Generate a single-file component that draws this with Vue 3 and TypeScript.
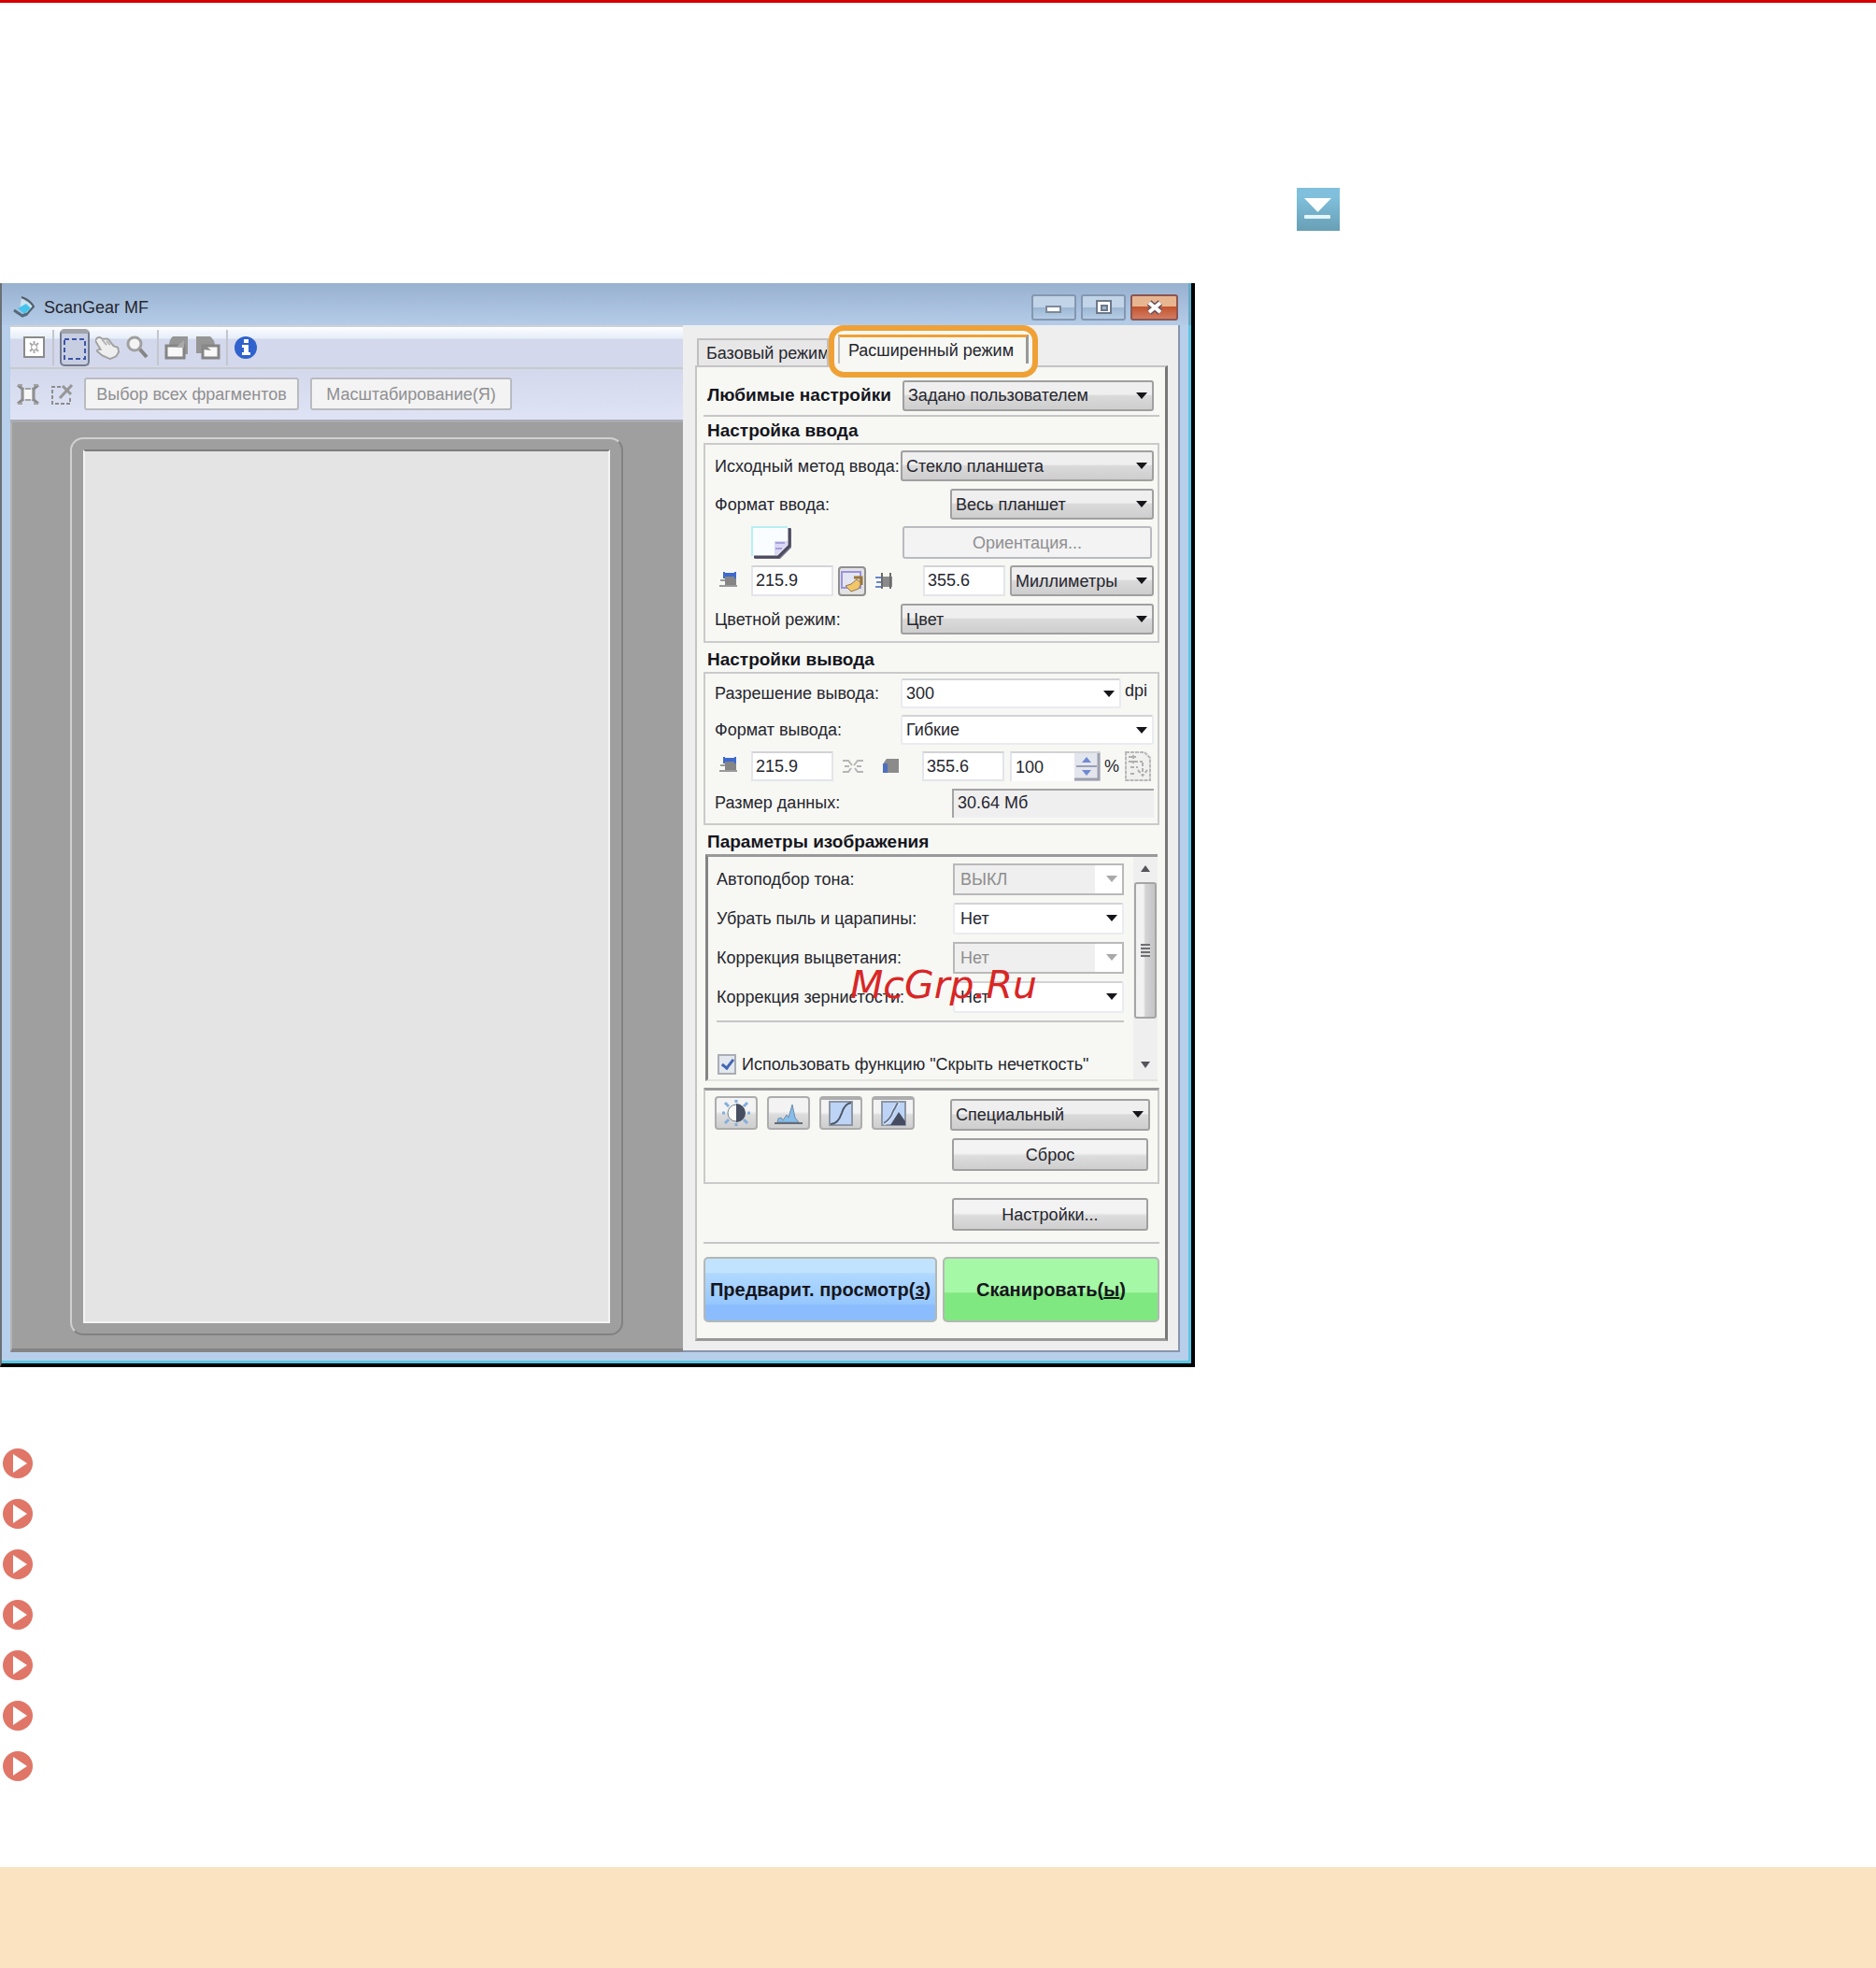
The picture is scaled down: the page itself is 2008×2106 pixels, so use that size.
<script setup lang="ts">
import { ref } from 'vue'

interface Option {
  id: string
  label: string
  value: string
  disabled: boolean
}

const imageOptions: Option[] = [
  { id: 'tone', label: 'Автоподбор тона:', value: 'ВЫКЛ', disabled: true },
  { id: 'dust', label: 'Убрать пыль и царапины:', value: 'Нет', disabled: false },
  { id: 'fade', label: 'Коррекция выцветания:', value: 'Нет', disabled: true },
  { id: 'grain', label: 'Коррекция зернистости:', value: 'Нет', disabled: false },
]

const topics = [1, 2, 3, 4, 5, 6, 7]
const inputWidth = ref('215.9')
const inputHeight = ref('355.6')
const outputWidth = ref('215.9')
const outputHeight = ref('355.6')
const scale = ref('100')
const unsharp = ref(true)
</script>

<template>
  <main class="page">
    <header class="page-head">
      <a href="#top" class="jump" aria-label="Вниз">
        <svg viewBox="0 0 46 46" width="46" height="46">
          <path d="M8 11h29L22.500 26z" fill="#fff" />
          <rect x="8" y="29" width="28" height="4" rx="1" fill="#e4f5fb" />
        </svg>
      </a>
    </header>

    <section class="window">
      <div class="titlebar">
        <svg class="app-icon" viewBox="0 0 26 24" width="26" height="24">
          <path d="M9 2l13 9-7 9-8-6z" fill="#cfe3ee" />
          <path d="M9 1q9 3 13 10l-8 9" fill="none" stroke="#4f5d69" stroke-width="2" />
          <path d="M5 13l9-5 5 5-7 6z" fill="#45c3ec" />
          <path d="M1 15l9 6 5-2" fill="none" stroke="#566a7c" stroke-width="3" />
        </svg>
        <span class="app-name">ScanGear MF</span>
        <button class="win-btn" aria-label="Свернуть">
          <svg viewBox="0 0 20 16" width="20" height="16"><rect x="2" y="7" width="15" height="6" fill="#fff" stroke="#7d8898" stroke-width="2" /></svg>
        </button>
        <button class="win-btn" aria-label="Развернуть">
          <svg viewBox="0 0 20 16" width="20" height="16"><rect x="3" y="1" width="15" height="13" fill="#fff" stroke="#6d7888" stroke-width="2" /><rect x="8" y="6" width="6" height="5" fill="#9bb4cd" stroke="#6d7888" stroke-width="2" /></svg>
        </button>
        <button class="win-btn close" aria-label="Закрыть">
          <svg viewBox="0 0 20 16" width="20" height="16"><path d="M4 3l12 10M16 3L4 13" stroke="#6c5560" stroke-width="7" /><path d="M4 3l12 10M16 3L4 13" stroke="#fff" stroke-width="4" /></svg>
        </button>
      </div>

      <div class="body">
        <div class="preview">
          <div class="tools">
            <button class="tool" aria-label="Автокадрирование">
              <svg viewBox="0 0 26 26" width="26" height="26"><rect x="2" y="2" width="21" height="21" fill="#fff" stroke="#8b8b8b" stroke-width="2" /><path d="M8 8l9 9M17 8l-9 9M12.500 6v3M12.500 16v3" stroke="#aaa" stroke-width="2" /><circle cx="12.500" cy="12.500" r="3" fill="#fff" stroke="#999" /></svg>
            </button>
            <i class="sep"></i>
            <button class="tool on" aria-label="Рамка обрезки">
              <svg viewBox="0 0 26 26" width="26" height="26"><rect x="2" y="3" width="22" height="21" fill="none" stroke="#3b55a8" stroke-width="2" stroke-dasharray="5 3" /></svg>
            </button>
            <button class="tool" aria-label="Переместить">
              <svg viewBox="0 0 28 28" width="26" height="26"><path d="M2 3q3-2 6 1h4q3-1 5 3l4 5 5 2 1 5-3 5-7 3-9-4-6-5q0-2 4-2l-3-5-3-5z" fill="#eee" stroke="#a0a0a0" stroke-width="2" /><path d="M8 5l5 6M13 6l4 5" stroke="#b4b4b4" stroke-width="2" /></svg>
            </button>
            <button class="tool" aria-label="Увеличить">
              <svg viewBox="0 0 26 26" width="26" height="26"><path d="M15 14l8 9" stroke="#858585" stroke-width="4" /><circle cx="10" cy="9" r="7" fill="#f4f4f4" stroke="#a0a0a0" stroke-width="3" /></svg>
            </button>
            <i class="sep wide"></i>
            <button class="tool" aria-label="Повернуть влево">
              <svg viewBox="0 0 26 28" width="26" height="28"><path d="M9 2h16v19h-4V12H5q0-7 4-10z" fill="#969696" /><rect x="2" y="12" width="19" height="13" fill="#f8f8f8" stroke="#858585" stroke-width="3" /><path d="M12 14L21 6v8z" fill="#aaa" /></svg>
            </button>
            <button class="tool" aria-label="Повернуть вправо">
              <svg viewBox="0 0 28 28" width="28" height="28"><path d="M2 2h15q5 4 5 10H9v8H2z" fill="#969696" /><rect x="9" y="12" width="17" height="13" fill="#f8f8f8" stroke="#858585" stroke-width="3" /><path d="M9 9l9 8-9-1z" fill="#8b8b8b" /></svg>
            </button>
            <i class="sep"></i>
            <button class="tool" aria-label="Сведения">
              <svg viewBox="0 0 26 26" width="26" height="26"><circle cx="13" cy="13" r="12" fill="#2f62cc" /><rect x="11" y="4" width="5" height="4" fill="#fff" /><path d="M9 10h7v8h2v3H9v-3h2v-5H9z" fill="#fff" /></svg>
            </button>
          </div>
          <div class="tools second">
            <button class="tool" aria-label="Убрать рамку">
              <svg viewBox="0 0 26 24" width="26" height="24"><path d="M2 2l6 5M24 2l-6 5M2 22l6-5M24 22l-6-5" stroke="#8a8a8a" stroke-width="3" /><path d="M2 2h5M19 2h5M2 22h5M19 22h5M10 6h6M10 18h6" stroke="#a4a4a4" stroke-width="2" /><path d="M7 5v14M19 5v14" stroke="#8f8f8f" stroke-width="3" /><rect x="9" y="7" width="8" height="10" fill="#f7f7f7" /></svg>
            </button>
            <button class="tool" aria-label="Удалить рамку">
              <svg viewBox="0 0 26 24" width="26" height="24"><path d="M12 4H3v18h19v-8" fill="none" stroke="#8d8d8d" stroke-width="2" stroke-dasharray="4 2" /><path d="M14 3l9 9M24 2L11 16" stroke="#969696" stroke-width="3" /></svg>
            </button>
            <button class="flat all" disabled>Выбор всех фрагментов</button>
            <button class="flat zoom" disabled>Масштабирование(Я)</button>
          </div>
          <div class="bed">
            <div class="frame"><div class="sheet"></div></div>
          </div>
        </div>

        <div class="side">
          <div class="tabs" role="tablist">
            <button class="tab" role="tab" aria-selected="false">Базовый режим</button>
            <div class="marked">
              <button class="tab active" role="tab" aria-selected="true">Расширенный режим</button>
            </div>
          </div>

          <form class="panel" @submit.prevent>
            <div class="row fav">
              <label class="bold" for="fav">Любимые настройки</label>
              <span class="combo w-fav"><select id="fav"><option>Задано пользователем</option></select></span>
            </div>
            <hr class="first" />

            <h2>Настройка ввода</h2>
            <div class="group input">
              <div class="row">
                <label for="src">Исходный метод ввода:</label>
                <span class="combo w-full"><select id="src"><option>Стекло планшета</option></select></span>
              </div>
              <div class="row">
                <label for="fmt">Формат ввода:</label>
                <span class="combo w-part"><select id="fmt"><option>Весь планшет</option></select></span>
              </div>
              <div class="row">
                <svg class="sheet-icon" viewBox="0 0 44 36" width="44" height="36">
                  <path d="M4 3h39v20L31 35H4z" fill="#77758a" />
                  <path d="M1 1h39v19L28 32H1z" fill="#fafdff" />
                  <path d="M1 32V1h38" fill="none" stroke="#b8eff3" stroke-width="2" />
                  <path d="M41 2v19L29 33H3" fill="none" stroke="#4d4b60" stroke-width="3" />
                  <path d="M25 16h14v4L28 31h-3z" fill="#d9d7f4" /><path d="M26 18h10M26 24h7" stroke="#a5a2dd" stroke-width="2" />
                </svg>
                <button class="flat orient" disabled>Ориентация...</button>
              </div>
              <div class="row sizes">
                <svg class="dim" viewBox="0 0 20 20" width="20" height="20"><rect x="6" y="5" width="12" height="11" fill="#858585" /><path d="M5 3h13" stroke="#3d69d1" stroke-width="4" /><path d="M5 0v7M17 0v7" stroke="#3d69d1" stroke-width="2" /><path d="M1 9h5M0 15h19" stroke="#999" stroke-width="2" /></svg>
                <input v-model="inputWidth" class="num" aria-label="Ширина ввода" />
                <button class="swap" aria-label="Поменять местами">
                  <svg viewBox="0 0 26 28" width="26" height="28"><path d="M2 4h20v17H2z" fill="#e4e5f3" stroke="#9993e0" stroke-width="2" /><path d="M6 19l6-2 6-5 5 4-3 6-8 3z" fill="#f2c66b" stroke="#8b7856" /><path d="M15 10h8v8" stroke="#9b7536" stroke-width="3" fill="none" /></svg>
                </button>
                <svg class="dim" viewBox="0 0 20 20" width="20" height="20"><rect x="7" y="5" width="12" height="11" fill="#8a8a8a" /><path d="M8 1v17M17 1v17" stroke="#6b6b6b" stroke-width="2" /><path d="M1 6h6M2 11h5M1 16h6" stroke="#6886cf" stroke-width="2" /></svg>
                <input v-model="inputHeight" class="num second-num" aria-label="Высота ввода" />
                <span class="combo w-unit"><select aria-label="Единицы"><option>Миллиметры</option></select></span>
              </div>
              <div class="row">
                <label for="color">Цветной режим:</label>
                <span class="combo w-full"><select id="color"><option>Цвет</option></select></span>
              </div>
            </div>

            <h2>Настройки вывода</h2>
            <div class="group output">
              <div class="row">
                <label for="dpi">Разрешение вывода:</label>
                <span class="combo white w-dpi"><select id="dpi"><option>300</option></select></span>
                <span class="dpi">dpi</span>
              </div>
              <div class="row">
                <label for="out">Формат вывода:</label>
                <span class="combo white w-full"><select id="out"><option>Гибкие</option></select></span>
              </div>
              <div class="row sizes">
                <svg class="dim" viewBox="0 0 20 20" width="20" height="20"><rect x="6" y="5" width="12" height="11" fill="#858585" /><path d="M5 3h13" stroke="#3d69d1" stroke-width="4" /><path d="M5 0v7M17 0v7" stroke="#3d69d1" stroke-width="2" /><path d="M1 9h5M0 15h19" stroke="#999" stroke-width="2" /></svg>
                <input v-model="outputWidth" class="num" aria-label="Ширина вывода" />
                <svg class="chain" viewBox="0 0 24 16" width="24" height="16"><path d="M1 2h6l4 5M1 14h6l3-4M23 2h-6l-4 5M23 14h-6l-3-4M3 8h5M16 8h5" fill="none" stroke="#b5b5b5" stroke-width="2" /></svg>
                <svg class="dim out-height" viewBox="0 0 20 20" width="20" height="20"><path d="M6 2h13v15H3V6z" fill="#8b8b8b" /><path d="M2 7h5v10H2z" fill="#4f6fc3" /></svg>
                <input v-model="outputHeight" class="num second-num" aria-label="Высота вывода" />
                <span class="spin">
                  <input v-model="scale" aria-label="Масштаб" />
                  <button aria-label="Изменить масштаб">
                    <svg viewBox="0 0 28 30" width="28" height="30"><path d="M8 10l5-6 5 6zM8 18l5 6 5-6z" fill="#7189d0" /><path d="M2 14h22" stroke="#9aa0b5" stroke-width="2" /><path d="M0 28h26V0" fill="none" stroke="#9da0ad" stroke-width="3" /></svg>
                  </button>
                </span>
                <span class="percent">%</span>
                <svg class="paper" viewBox="0 0 28 32" width="28" height="32"><path d="M1 1h20l6 6v24H1z" fill="#f0f0ef" stroke="#b7b7b7" stroke-width="2" stroke-dasharray="4 1" /><path d="M4 11h15M4 6h8M6 17h8M6 24h6M19 12v13M14 20l5 6 5-6M9 4v9" fill="none" stroke="#b0b0b0" stroke-width="2" stroke-dasharray="4 2" /></svg>
              </div>
              <div class="row">
                <label for="bytes">Размер данных:</label>
                <output id="bytes" class="bytes">30.64 Мб</output>
              </div>
            </div>

            <h2>Параметры изображения</h2>
            <div class="scroller">
              <div class="options">
                <div v-for="o in imageOptions" :key="o.id" class="row">
                  <label :for="o.id">{{ o.label }}</label>
                  <span class="combo w-opt" :class="o.disabled ? 'off' : 'white'">
                    <select :id="o.id" :disabled="o.disabled"><option>{{ o.value }}</option></select>
                  </span>
                </div>
                <hr />
                <label class="check"><input v-model="unsharp" type="checkbox" /><span>Использовать функцию "Скрыть нечеткость"</span></label>
              </div>
              <div class="scrollbar" aria-hidden="true">
                <i class="up"></i>
                <div class="thumb"><i></i></div>
                <i class="down"></i>
              </div>
            </div>

            <div class="group adjust">
              <div class="curves">
                <button aria-label="Яркость и контрастность">
                  <svg viewBox="0 0 30 28" width="30" height="28"><path d="M3 3l4 4M27 3l-4 4M3 25l4-4M27 25l-4-4M0 14h3M27 14h3M15 0v3M15 25v3" stroke="#82aede" stroke-width="3" /><circle cx="15" cy="14" r="9" fill="#f8fafa" stroke="#77828e" /><path d="M15 4a10 10 0 0 1 0 20z" fill="#484e62" /></svg>
                </button>
                <button aria-label="Гистограмма">
                  <svg viewBox="0 0 30 28" width="30" height="28"><path d="M3 24l1-4 3-1 2 3 4-6 2 3 4-14 3 14 4 5z" fill="#86bdea" stroke="#6f8dab" /><path d="M0 25h30" stroke="#666d77" stroke-width="2" /></svg>
                </button>
                <button class="filled" aria-label="Кривая тонов">
                  <svg viewBox="0 0 30 28" width="30" height="28"><rect x="3" y="1" width="24" height="25" fill="#bdd4f7" stroke="#8d96a5" stroke-width="2" /><path d="M4 25q8 0 12-12Q19 3 26 2" fill="none" stroke="#4e5665" stroke-width="2" /></svg>
                </button>
                <button class="filled" aria-label="Порог">
                  <svg viewBox="0 0 30 28" width="30" height="28"><rect x="3" y="1" width="25" height="25" fill="#bdd4f7" stroke="#8d96a5" stroke-width="2" /><path d="M5 25Q13 20 16 8l5-6" fill="none" stroke="#e9f3ff" stroke-width="3" /><path d="M12 26l9-14 7 10v4z" fill="#474d61" /><path d="M5 24q7-4 10-13l5-9" fill="none" stroke="#66728a" stroke-width="2" /></svg>
                </button>
              </div>
              <div class="reset">
                <span class="combo w-spec"><select aria-label="Набор"><option>Специальный</option></select></span>
                <button class="std">Сброс</button>
              </div>
            </div>

            <button class="std prefs">Настройки...</button>
            <hr class="last" />
            <div class="actions">
              <button class="big preview-btn">Предварит. просмотр(<u>з</u>)</button>
              <button class="big scan-btn">Сканировать(<u>ы</u>)</button>
            </div>
          </form>
        </div>
      </div>
      <span class="watermark">McGrp.Ru</span>
    </section>

    <ul class="topics">
      <li v-for="t in topics" :key="t">
        <a href="#top" :aria-label="'Раздел ' + t">
          <svg viewBox="0 0 34 34" width="34" height="34"><circle cx="17" cy="17" r="16" fill="#e07667" /><path d="M12 7v20l15-10z" fill="#fff" /></svg>
        </a>
      </li>
    </ul>
    <footer class="note"></footer>
  </main>
</template>

<style>
body {
  margin: 0;
  background: #fff;
}
</style>

<style scoped>
* {
  box-sizing: border-box;
}
svg {
  display: block;
  flex: none;
}
button,
input,
select {
  font: inherit;
  color: inherit;
  margin: 0;
  padding: 0;
}
.page {
  font: 18px/22px 'Liberation Sans', Arial, sans-serif;
  color: #26262e;
}
.page-head {
  border-top: 3px solid #d40000;
  padding: 198px 0 56px 1388px;
}
.jump {
  display: block;
  width: 46px;
  background: linear-gradient(#80c0dc 20%, #689fb5);
}

/* window chrome */
.window {
  position: relative;
  width: 100%;
  max-width: 1279px;
  background: #b7cfea;
  border-left: 2px solid #6b7076;
  border-right: 4px solid #000;
  border-bottom: 4px solid #000;
}
.titlebar {
  display: flex;
  align-items: center;
  gap: 5px;
  height: 45px;
  padding: 6px 11px 0 12px;
  border-right: 3px solid #62aac6;
  background: linear-gradient(#98b1cf, #b4cce8);
}
.app-name {
  flex: 1;
  margin-left: 2px;
}
.win-btn {
  display: flex;
  align-items: center;
  justify-content: center;
  width: 48px;
  height: 28px;
  border: 2px solid #8497ae;
  border-radius: 3px;
  background: linear-gradient(#c1d4e8 50%, #9cb6d2 50%, #b5cde6);
}
.win-btn.close {
  width: 51px;
  border-color: #8d5550;
  background: linear-gradient(#e8b591 45%, #c1532c 45%, #d37b62);
}
.body {
  display: flex;
  padding: 0 9px 9px;
  border-right: 3px solid #5cc5e2;
  border-bottom: 3px solid #5cc5e2;
}

/* preview pane */
.preview {
  flex: 1;
  display: flex;
  flex-direction: column;
}
.tools {
  display: flex;
  align-items: center;
  gap: 6px;
  height: 47px;
  padding: 0 0 0 13px;
  border-top: 2px solid #cfd1d2;
  border-bottom: 2px solid #c9cacb;
  background: linear-gradient(#fcfdff, #e6eef8 12px, #d3d8ec 13px);
}
.tools.second {
  gap: 12px;
  height: 57px;
  padding: 0 0 1px 6px;
  border-top: 0;
  border-bottom: 3px solid #aaaab2;
  background: linear-gradient(#d3d8ec, #dfe3f5);
}
.second .tool + .tool {
  margin: 0 -1px 0 -2px;
}
.tool {
  display: flex;
  align-items: center;
  justify-content: center;
  border: 0;
  background: none;
}
.tool.on {
  width: 32px;
  height: 40px;
  border: 2px solid #737b90;
  border-top: 5px solid #a0a3aa;
  border-radius: 5px;
  background: #c8cee2;
}
.sep {
  width: 2px;
  height: 38px;
  background: #c3c6ce;
}
.sep.wide {
  margin-left: 2px;
}
.flat {
  height: 35px;
  border: 2px solid #b9bbc0;
  border-radius: 3px;
  background: #f3f3f3;
  color: #8f8f92;
}
.all {
  width: 230px;
}
.zoom {
  width: 216px;
}
.bed {
  flex: 1;
  display: flex;
  padding: 16px 64px 14px 62px;
  border-left: 2px solid #b4b4b4;
  border-bottom: 4px solid #858585;
  background: #9f9f9f;
}
.frame {
  flex: 1;
  display: flex;
  padding: 11px 12px;
  border: 2px solid #828282;
  border-top-color: #d0d0d0;
  border-left-color: #d0d0d0;
  border-radius: 14px;
}
.sheet {
  flex: 1;
  background: #e4e4e4;
  border: 2px solid #f4f4f4;
  border-top-color: #7d7d7d;
}

/* settings pane */
.side {
  flex: none;
  width: 532px;
  padding: 0 11px 10px 13px;
  background: #eee;
  border-right: 2px solid #8795ac;
  border-bottom: 2px solid #8795ac;
}
.tabs {
  display: flex;
  align-items: flex-end;
  height: 43px;
}
.tab {
  height: 29px;
  border: 2px solid #c0c0c0;
  border-bottom: 0;
  background: #e7e7e7;
  padding: 0 0 0 8px;
  margin-left: 2px;
  width: 141px;
  white-space: nowrap;
  overflow: hidden;
  text-align: left;
}
.marked {
  position: relative;
  margin-bottom: -13px;
  width: 224px;
  height: 56px;
  padding: 4px;
  border: 6px solid #f0a135;
  border-radius: 16px;
  background: #f7f8f4;
  z-index: 1;
}
.tab.active {
  width: 100%;
  height: 31px;
  margin: 0;
  padding: 0 4px 0 0;
  text-align: center;
  border-top: 3px solid #f0a135;
  border-right: 3px solid #999;
  background: #f7f8f4;
}
.panel {
  display: flex;
  flex-direction: column;
  border: 2px solid #c4c4c4;
  border-right: 3px solid #777;
  border-bottom: 3px solid #999;
  background: #f7f8f4;
  padding: 13px 6px 17px 7px;
}
.row {
  display: flex;
  align-items: center;
  justify-content: space-between;
}
.fav {
  height: 34px;
  padding: 0 6px 0 4px;
}
.bold,
h2,
.big {
  font-weight: bold;
  color: #15151d;
}
.bold,
h2 {
  font-size: 19px;
}
hr {
  width: 100%;
  height: 2px;
  margin: 4px 0;
  border: 0;
  background: #c6c6c6;
}
.first {
  margin-bottom: 2px;
}
h2 {
  margin: 0 0 0 4px;
  line-height: 26px;
}
.group + h2 {
  margin-top: 5px;
}
.group {
  border: 2px solid #cacaca;
}
.input {
  display: grid;
  grid-auto-rows: 33px;
  gap: 8px;
  padding: 6px 6px 7px 10px;
}
.output {
  display: grid;
  grid-auto-rows: 32px;
  gap: 7px;
  padding: 5px 4px 6px 10px;
}

.combo {
  position: relative;
  flex: none;
  height: 33px;
}
.combo select {
  display: block;
  width: 100%;
  height: 100%;
  padding: 0 26px 0 4px;
  appearance: none;
  border: 2px solid #a0a0a0;
  border-radius: 3px;
  background: linear-gradient(#efefef 45%, #dadada 50%, #cecece);
  opacity: 1;
}
.combo::after {
  content: '';
  position: absolute;
  right: 7px;
  top: 13px;
  border: 6px solid transparent;
  border-top: 7px solid #16161a;
  border-bottom: 0;
  pointer-events: none;
}
.combo.white select {
  background: #fff;
  border-color: #d2d3d6 #e9ebf0 #e9ebf0;
}
.combo.off select {
  color: #8d8d8d;
  border-color: #b9b9b9;
  border-radius: 0;
  background: linear-gradient(90deg, #efefef 84%, #fff 84%);
}
.combo.off::after {
  border-top-color: #a9a9a9;
}
.w-fav {
  width: 269px;
}
.w-full {
  width: 271px;
}
.w-part {
  width: 218px;
}
.w-unit {
  width: 154px;
  margin-left: 5px;
}
.w-dpi {
  width: 236px;
  margin-left: auto;
}
.w-opt {
  width: 183px;
  height: 34px;
}
.w-opt select {
  padding-left: 6px;
}
.output .combo {
  height: 32px;
}
.dpi {
  width: 31px;
  margin-left: 4px;
  padding-bottom: 6px;
}
.sheet-icon {
  margin-left: 39px;
}
.orient {
  width: 267px;
  margin-right: 2px;
}
.sizes {
  justify-content: flex-start;
}
.dim {
  margin-left: 5px;
}
.num {
  width: 88px;
  height: 33px;
  padding-left: 3px;
  border: 2px solid #e3e5ea;
  border-top-color: #d2d3d6;
  background: #fff;
  margin-left: 14px;
}
.second-num {
  margin-left: 32px;
}
.output .num {
  height: 32px;
}
.output .second-num {
  margin-left: 24px;
}
.swap {
  display: flex;
  align-items: center;
  justify-content: center;
  width: 30px;
  height: 32px;
  margin: 0 4px 0 5px;
  border: 2px solid #8f8f8f;
  border-radius: 4px;
  background: #e2e2e2;
}
.chain {
  margin-left: 9px;
}
.out-height {
  margin-left: 18px;
}
.spin {
  display: flex;
  margin-left: 6px;
  height: 32px;
  border-top: 2px solid #d2d3d6;
  border-left: 2px solid #e3e5ea;
}
.spin input {
  width: 67px;
  padding-left: 4px;
  border: 0;
  background: #fff;
}
.spin button {
  border: 0;
  background: #e4e6ee;
}
.percent {
  width: 16px;
  margin-left: 4px;
  margin-right: 6px;
}
.bytes {
  width: 216px;
  height: 31px;
  padding: 2px 4px;
  border-top: 2px solid #a4a4a4;
  border-left: 2px solid #a4a4a4;
  background: #efefef;
}

/* image options */
.scroller {
  display: flex;
  height: 243px;
  margin: 0 2px;
  border-top: 3px solid #999;
  border-left: 3px solid #858585;
  border-bottom: 2px solid #e3e3e0;
}
.options {
  flex: 1;
  display: flex;
  flex-direction: column;
  gap: 8px;
  padding: 7px 10px 0 9px;
}
.options hr {
  margin: 0;
  flex: none;
}
.check {
  display: flex;
  align-items: center;
  gap: 6px;
  margin-top: 26px;
  white-space: nowrap;
}
.check input {
  appearance: none;
  flex: none;
  width: 20px;
  height: 22px;
  margin-left: 1px;
  border: 2px solid #a9adb4;
  background: #e3e7ee;
}
.check input:checked::before {
  content: '';
  display: block;
  width: 5px;
  height: 10px;
  margin: 1px 0 0 5px;
  border-right: 3px solid #4366b5;
  border-bottom: 3px solid #4366b5;
  transform: rotate(38deg);
}
.scrollbar {
  display: flex;
  flex-direction: column;
  align-items: center;
  width: 26px;
  background: #efefef;
}
.up,
.down {
  border: 5px solid transparent;
}
.up {
  margin: 9px 0 11px;
  border-top: 0;
  border-bottom: 7px solid #55555c;
}
.down {
  margin: auto 0 12px;
  border-bottom: 0;
  border-top: 7px solid #55555c;
}
.thumb {
  display: flex;
  align-items: center;
  justify-content: center;
  width: 24px;
  height: 146px;
  border: 2px solid #a5a5a5;
  border-radius: 3px;
  background: linear-gradient(90deg, #f2f2f2 40%, #d4d4d4 50%, #c4c4c8);
}
.thumb i {
  width: 10px;
  height: 14px;
  background: repeating-linear-gradient(#6f6f74 0 2px, #ddd 2px 4px);
}

/* adjustments and actions */
.adjust {
  display: flex;
  justify-content: space-between;
  height: 103px;
  margin-top: 7px;
  padding: 6px 8px 0 10px;
  border-top: 3px solid #999;
}
.curves {
  display: flex;
  gap: 10px;
}
.curves button {
  display: flex;
  align-items: center;
  justify-content: center;
  width: 46px;
  height: 36px;
  border: 2px solid #adadad;
  border-radius: 4px;
  background: linear-gradient(#f3f3f3 45%, #dcdcdc 55%, #cfcfcf);
}
.curves .filled {
  border-top: 4px solid #adadad;
}
.reset {
  display: flex;
  flex-direction: column;
  align-items: center;
  gap: 8px;
  padding-top: 3px;
}
.w-spec {
  width: 214px;
  height: 34px;
}
.std {
  width: 210px;
  height: 35px;
  border: 2px solid #a0a0a0;
  border-radius: 3px;
  background: linear-gradient(#f3f3f3 45%, #dcdcdc 55%, #cfcfcf);
}
.prefs {
  align-self: flex-end;
  margin: 15px 12px 0 0;
}
.last {
  margin: 12px 0 14px;
}
.actions {
  display: flex;
  gap: 6px;
}
.big {
  height: 70px;
  border: 2px solid #b3b8b5;
  border-radius: 5px;
  font-size: 20px;
  white-space: nowrap;
}
.preview-btn {
  width: 250px;
  background: linear-gradient(#c1e3fd 22%, #b0d9fe 24%, #96c7fd 73%, #8bbcfd 76%);
}
.scan-btn {
  flex: 1;
  background: linear-gradient(#a5f8a5 54%, #80e880 56%);
}
.watermark {
  position: absolute;
  left: 908px;
  top: 727px;
  font: italic 41px/48px 'DejaVu Sans', sans-serif;
  color: #d92626;
  pointer-events: none;
}

.topics {
  display: grid;
  gap: 20px;
  margin: 0;
  padding: 86px 0 91px 2px;
  list-style: none;
}
.topics a {
  display: block;
  width: 34px;
}
.note {
  height: 108px;
  background: #fbe3c2;
}
</style>
